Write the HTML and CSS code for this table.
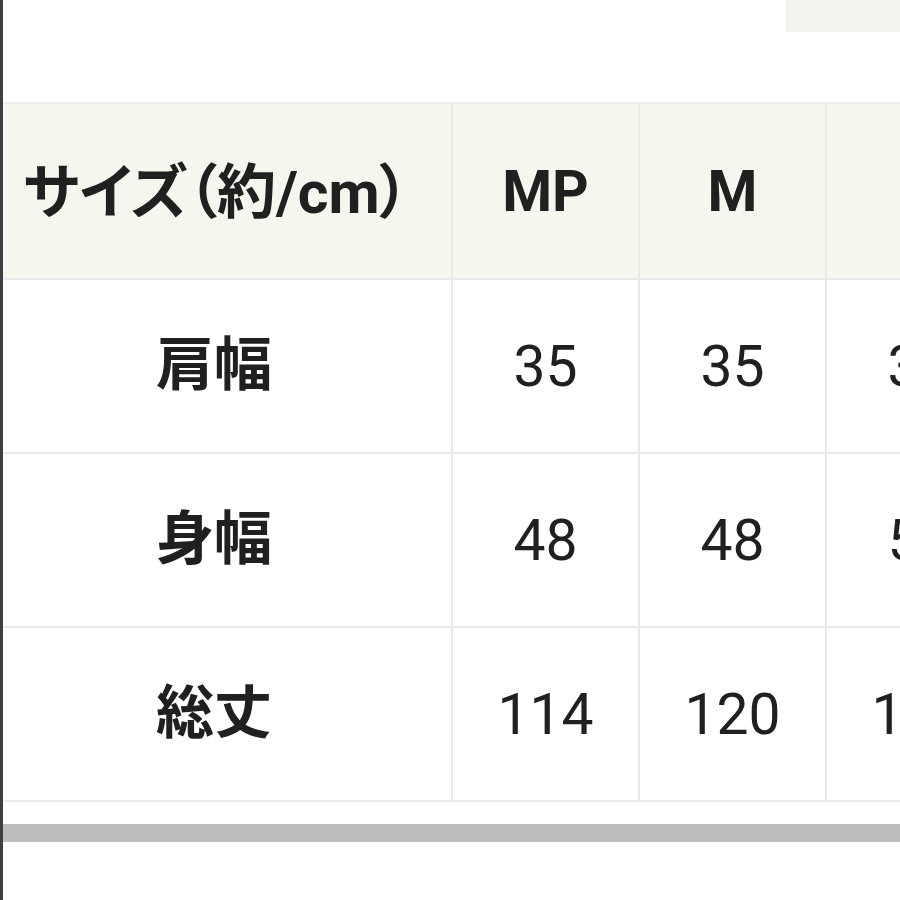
FILE: index.html
```html
<!DOCTYPE html>
<html lang="ja">
<head>
<meta charset="utf-8">
<link rel="stylesheet" href="styles.css">
</head>
<body>
<div class="page">
  <div class="top">
    <div class="top-box"></div>
  </div>
  <div class="table-wrap">
    <table class="size-table">
      <colgroup>
        <col class="c-label"><col class="c-size"><col class="c-size"><col class="c-size">
      </colgroup>
      <thead>
        <tr>
          <th class="label head-label">サイズ（約/cm）</th>
          <th>MP</th>
          <th>M</th>
          <th>L</th>
        </tr>
      </thead>
      <tbody>
        <tr><th class="label">肩幅</th><td>35</td><td>35</td><td>36</td></tr>
        <tr><th class="label">身幅</th><td>48</td><td>48</td><td>50</td></tr>
        <tr><th class="label">総丈</th><td>114</td><td>120</td><td>122</td></tr>
      </tbody>
    </table>
  </div>
  <div class="scrollbar"></div>
</div>
</body>
</html>
```
FILE: styles.css
```css
html, body {
  margin: 0;
  padding: 0;
  background: #ffffff;
}
.page {
  width: 900px;
  height: 900px;
  overflow: hidden;
  border-left: 3px solid #3b4045;
  box-sizing: border-box;
  background: #ffffff;
  font-family: Roboto, "Noto Sans CJK JP", sans-serif;
  color: #202020;
}
.top {
  height: 102px;
  display: flex;
  justify-content: flex-end;
}
.top-box {
  width: 114px;
  height: 32px;
  background: #f2f4ee;
}
.table-wrap {
  width: 897px;
  overflow: hidden;
}
.size-table {
  border-collapse: collapse;
  table-layout: fixed;
  width: 1010px;
}
.c-label { width: 449px; }
.c-size { width: 187px; }
.size-table tr.row { height: 174px; }
.size-table th,
.size-table td {
  border: 2px solid #e9e9e9;
  text-align: center;
  vertical-align: middle;
  padding: 0;
  white-space: nowrap;
}
.size-table tr:first-child th { border-top: 2px solid #eeeeee; }
.size-table tr > :first-child { border-left: none; }
.size-table thead th {
  height: 174px;
  background: #f5f7ef;
  font-size: 57px;
  font-weight: 700;
}
.size-table tbody th,
.size-table tbody td {
  height: 172px;
  font-size: 57px;
}
.size-table tbody td {
  font-weight: 400;
}
.size-table tbody th.label {
  font-family: "Noto Sans CJK JP", sans-serif;
  font-weight: 700;
  font-size: 58px;
  height: 160px;
  padding: 0 26px 12px 0;
}
.size-table thead th.head-label {
  font-family: Roboto, "Noto Sans CJK JP", sans-serif;
  text-align: left;
  height: 166px;
  padding: 0 0 8px 20px;
  font-size: 59px;
  font-feature-settings: "palt";
}
.scrollbar {
  margin-top: 22px;
  height: 18px;
  background: #bdbdbd;
}
```
